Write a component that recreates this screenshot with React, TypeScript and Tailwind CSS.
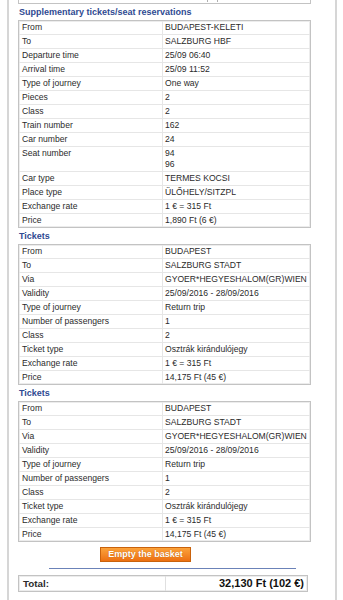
import React from 'react';

type Row = [string, string | string[]];

const SUPPLEMENTARY: Row[] = [
  ['From', 'BUDAPEST-KELETI'],
  ['To', 'SALZBURG HBF'],
  ['Departure time', '25/09 06:40'],
  ['Arrival time', '25/09 11:52'],
  ['Type of journey', 'One way'],
  ['Pieces', '2'],
  ['Class', '2'],
  ['Train number', '162'],
  ['Car number', '24'],
  ['Seat number', ['94', '96']],
  ['Car type', 'TERMES KOCSI'],
  ['Place type', 'ÜLŐHELY/SITZPL'],
  ['Exchange rate', '1 € = 315 Ft'],
  ['Price', '1,890 Ft (6 €)'],
];

const TICKET: Row[] = [
  ['From', 'BUDAPEST'],
  ['To', 'SALZBURG STADT'],
  ['Via', 'GYOER*HEGYESHALOM(GR)WIEN'],
  ['Validity', '25/09/2016 - 28/09/2016'],
  ['Type of journey', 'Return trip'],
  ['Number of passengers', '1'],
  ['Class', '2'],
  ['Ticket type', 'Osztrák kirándulójegy'],
  ['Exchange rate', '1 € = 315 Ft'],
  ['Price', '14,175 Ft (45 €)'],
];

function Heading({ children }: { children: React.ReactNode }) {
  return (
    <div className="h-[16px] pl-[1px] text-[9px] font-bold leading-[16px] text-[#2f4a92]">
      {children}
    </div>
  );
}

function InfoTable({ rows }: { rows: Row[] }) {
  return (
    <div className="w-[293px] border border-[#c3c3c3] bg-white shadow-[inset_0_0_0_1px_#ececec]">
      {rows.map(([label, value], i) => (
        <div
          key={i}
          className={`flex text-[8.6px] leading-[11px] text-[#2b2b2b] ${
            i < rows.length - 1 ? 'border-b border-[#e6e6e6]' : ''
          }`}
        >
          <div className="w-[144px] shrink-0 border-r border-[#e6e6e6] py-[1px] pl-[3px]">{label}</div>
          <div className="py-[1px] pl-[2px] whitespace-nowrap">
            {Array.isArray(value) ? value.map((v) => <div key={v}>{v}</div>) : value}
          </div>
        </div>
      ))}
    </div>
  );
}

export default function App() {
  return (
    <div className="h-[600px] w-[343px] overflow-hidden bg-white font-['Liberation_Sans',Arial,sans-serif]">
      <div className="ml-[7px] h-full w-[330px] border-x-2 border-[#d6d6d6] pl-[9px]">
        {/* tail of the table above */}
        <div className="flex h-[4px] w-[293px] border-x border-b border-[#c3c3c3]">
          <div className="ml-[188px] h-[2px] w-[1px] bg-[#b0b0b0]" />
          <div className="ml-[9px] h-[2px] w-[1px] bg-[#b0b0b0]" />
        </div>

        <Heading>Supplementary tickets/seat reservations</Heading>
        <InfoTable rows={SUPPLEMENTARY} />

        <Heading>Tickets</Heading>
        <InfoTable rows={TICKET} />

        <Heading>Tickets</Heading>
        <InfoTable rows={TICKET} />

        <div className="mt-[5px] flex pl-[82px]">
          <button className="h-[15px] w-[91px] border border-[#c9620c] bg-gradient-to-b from-[#fba23a] to-[#ec7010] text-[9px] font-bold leading-[13px] text-white [text-shadow:0_0_1px_#b85a00]">
            Empty the basket
          </button>
        </div>

        <div className="mt-[6px] ml-[31px] h-[1px] w-[247px] bg-[#6b82b8]" />

        <div className="mt-[6px] flex h-[17px] w-[290px] border border-[#c3c3c3] shadow-[inset_0_0_0_1px_#ececec]">
          <div className="w-[147px] border-r border-[#e0e0e0] pl-[4px] text-[9.8px] font-bold leading-[15px] text-[#2b2b2b]">
            Total:
          </div>
          <div className="flex-1 pr-[3px] text-right text-[11px] font-bold leading-[15px] text-[#111]">
            32,130 Ft (102 €)
          </div>
        </div>
      </div>
    </div>
  );
}
